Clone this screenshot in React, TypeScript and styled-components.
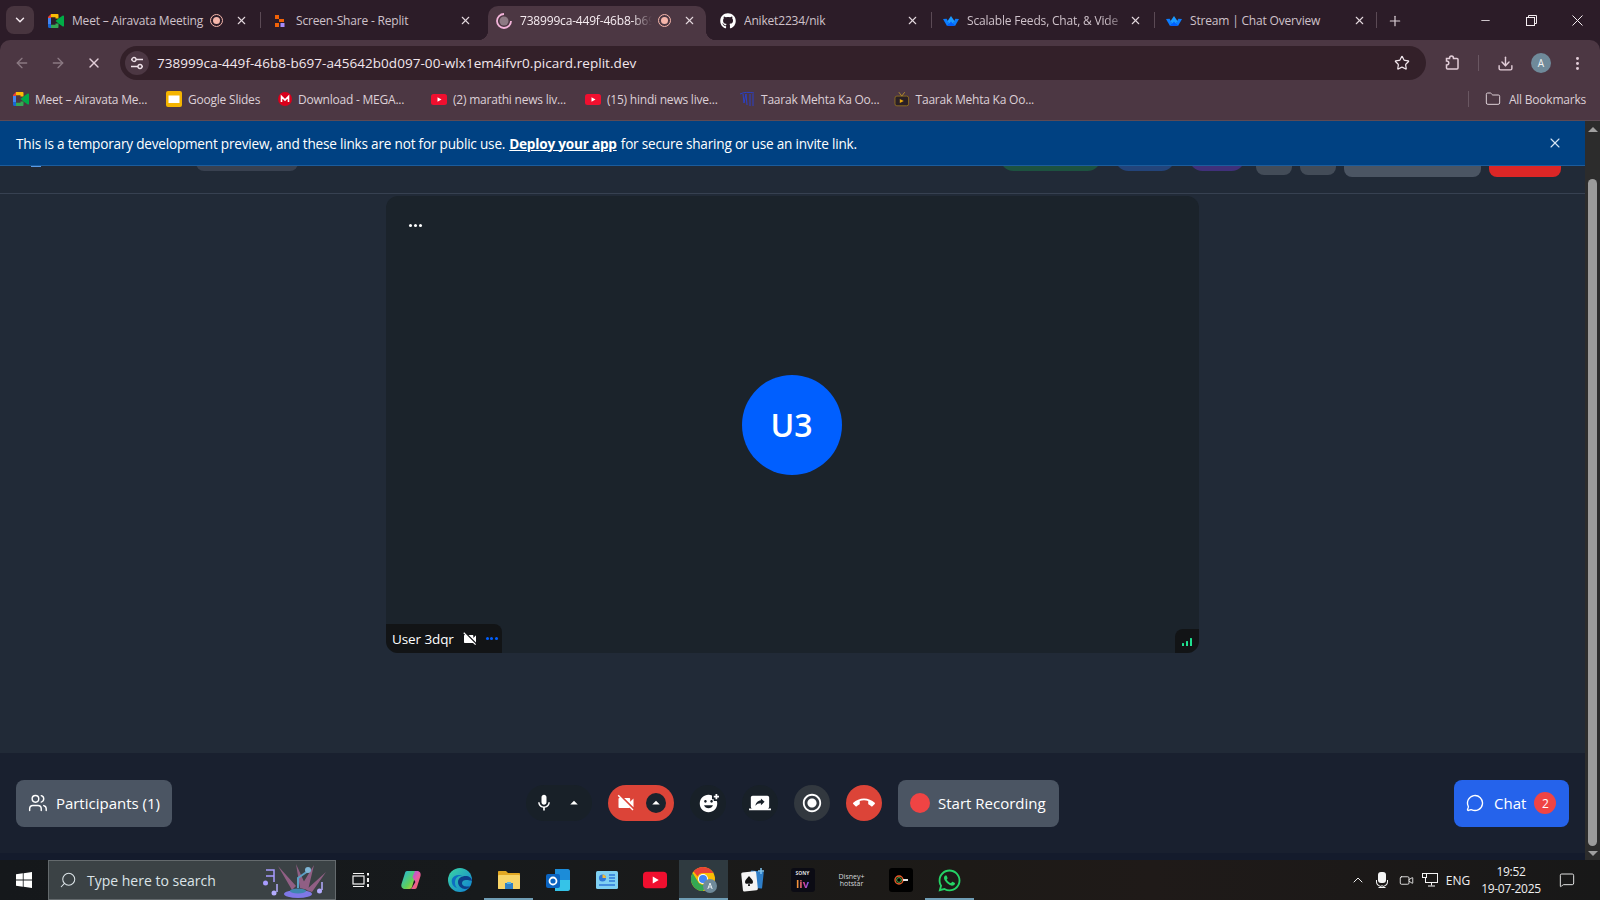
import React from "react";
import styled, { createGlobalStyle } from "styled-components";
import { ArrowLeft, ArrowRight, X, Star, Download, MoreVertical, Folder, ChevronDown, ChevronUp, Plus, Minus, Users, MessageCircle, Search, Video, MessageSquare } from "lucide-react";
import { MdMic, MdVideocamOff, MdArrowDropUp, MdAddReaction, MdRadioButtonChecked, MdCallEnd, MdScreenShare } from "react-icons/md";
import { FaGithub, FaWhatsapp } from "react-icons/fa";

const Global = createGlobalStyle`
  html, body { margin: 0; padding: 0; background: #19202f; overflow: hidden; }
  * { box-sizing: border-box; }
  body { font-family: "Open Sans", "Noto Sans", sans-serif; }
`;

const Page = styled.div`
  width: 1600px; height: 900px; display: flex; flex-direction: column; overflow: hidden;
`;

/* ---------- browser chrome ---------- */
const TabStrip = styled.div`
  height: 40px; flex: none; background: #2c1c28; display: flex; align-items: flex-end; color: #d3c5cd;
`;
const TabSearch = styled.div`
  width: 28px; height: 28px; margin: 0 2px 6px 6px; border-radius: 8px; background: #48353f; color: #f3e8ee;
  display: flex; align-items: center; justify-content: center;
`;
const Tab = styled.div<{ $w: number; $active?: boolean; $pr?: number; $pl?: number; $div?: boolean }>`
  position: relative; width: ${p => p.$w}px; height: 34px; flex: none;
  padding: 0 ${p => p.$pr ?? 13}px 5px ${p => p.$pl ?? 13}px;
  display: flex; align-items: center; font-size: 12px; letter-spacing: -0.18px;
  border-radius: 10px 10px 0 0;
  background: ${p => (p.$active ? "#4c3743" : "transparent")};
  color: ${p => (p.$active ? "#f6ecf1" : "#cfc2ca")};
  ${p => p.$div ? `&::after { content: ""; position: absolute; right: 0; top: 6px; width: 1px; height: 16px; background: #5b4a55; }` : ""}
  ${p => p.$active ? `
    &::before { content: ""; position: absolute; left: -10px; bottom: 0; width: 10px; height: 10px; background: radial-gradient(circle at 0 0, transparent 10px, #4c3743 10.5px); }
    &::after { content: ""; position: absolute; right: -10px; bottom: 0; width: 10px; height: 10px; background: radial-gradient(circle at 100% 0, transparent 10px, #4c3743 10.5px); }
  ` : ""}
`;
const TabIcon = styled.span`
  width: 16px; height: 16px; flex: none; display: flex; align-items: center; justify-content: center; margin-right: 8px;
`;
const TabTitle = styled.span<{ $fade?: boolean }>`
  flex: 1; min-width: 0; white-space: nowrap; overflow: hidden;
  ${p => p.$fade ? "mask-image: linear-gradient(to right, #000 85%, transparent 100%);" : ""}
`;
const RecDot = styled.span`
  width: 13px; height: 13px; flex: none; border-radius: 50%; border: 1.5px solid #f6b6ab; margin: 0 12px 0 6px;
  display: flex; align-items: center; justify-content: center;
  &::after { content: ""; width: 7px; height: 7px; border-radius: 50%; background: #f6b6ab; }
`;
const TabClose = styled(X).attrs({ size: 13, strokeWidth: 2 })`
  flex: none; color: #e4d8de;
`;
const NewTab = styled.div`
  width: 36px; height: 34px; display: flex; align-items: center; justify-content: center; color: #dccfd6; padding-bottom: 5px;
`;
const WindowControls = styled.div`
  margin-left: auto; display: flex; height: 40px; color: #f4ecf0;
`;
const WinBtn = styled.div`
  width: 46px; height: 40px; display: flex; align-items: center; justify-content: center;
`;

const ToolbarBg = styled.div`
  flex: none; background: #2c1c28;
`;
const Toolbar = styled.div`
  height: 40px; background: #4c3743; border-radius: 10px 10px 0 0; display: flex; align-items: flex-end; padding-left: 4px;
`;
const NavBtn = styled.div<{ $dim?: boolean }>`
  width: 36px; height: 34px; display: flex; align-items: center; justify-content: center;
  color: ${p => (p.$dim ? "#8b7983" : "#e2cdd8")};
`;
const Omnibox = styled.div`
  width: 1306px; height: 34px; margin: 0 8px; border-radius: 17px; background: #332029;
  display: flex; align-items: center; padding: 0 16px 0 5px; color: #f2e7ed; font-size: 13.5px; letter-spacing: 0.05px;
`;
const TuneBadge = styled.span`
  width: 24px; height: 24px; border-radius: 50%; background: #4c3743; color: #efe2e9; margin-right: 8px;
  display: flex; align-items: center; justify-content: center; flex: none;
`;
const Url = styled.span`
  flex: 1; white-space: nowrap;
`;
const ToolDivider = styled.span`
  width: 1px; height: 16px; background: #6a5762; margin: 0 8px 9px 8px; flex: none;
`;
const AvatarDot = styled.span`
  width: 20px; height: 20px; border-radius: 50%; background: #6f8a9a; color: #f3f3f3; font-size: 10px;
  display: flex; align-items: center; justify-content: center;
`;
const BookmarkBar = styled.div`
  height: 41px; background: #4c3743; border-bottom: 1px solid #5d4a54; display: flex; align-items: center; padding: 0 0 2px 13px;
  color: #ddd0d7; font-size: 12px; letter-spacing: -0.22px;
`;
const Bookmark = styled.div<{ $w: number }>`
  width: ${p => p.$w}px; flex: none; display: flex; align-items: center; gap: 6px; white-space: nowrap;
`;
const BookmarkRight = styled.div`
  margin-left: auto; display: flex; align-items: center; padding-right: 14px; gap: 8px;
`;
const BookmarkDivider = styled.span`
  width: 1px; height: 16px; background: #6a5762; margin-right: 8px;
`;

/* ---------- page ---------- */
const Viewport = styled.div`
  flex: 1; min-height: 0; display: flex;
`;
const Content = styled.div`
  position: relative; flex: 1; min-width: 0; display: flex; flex-direction: column; background: #212a37;
`;
const Banner = styled.div`
  position: absolute; left: 0; right: 0; top: 0; height: 45px; background: #004182; border-bottom: 1px solid #1c5c9c;
  display: flex; align-items: center; padding: 0 22px 0 16px; color: #fff; font-size: 13.6px; font-weight: 500; letter-spacing: -0.21px; z-index: 2;
  a { color: #fff; font-weight: 700; text-decoration: underline; margin: 0 4px; }
`;
const BannerClose = styled(X).attrs({ size: 16, strokeWidth: 1.6 })`
  margin-left: auto; color: #d8e6f4;
`;
const Header = styled.header`
  height: 73px; flex: none; border-bottom: 1px solid #374151; display: flex; align-items: center; padding: 0 24px 0 31px;
`;
const HeaderMark = styled.div`
  width: 10px; height: 20px; background: #5a9be6; margin-right: 155px;
`;
const SoftChip = styled.div<{ $w: number; $h: number; $bg: string; $round?: boolean }>`
  width: ${p => p.$w}px; height: ${p => p.$h}px; background: ${p => p.$bg}; border-radius: ${p => (p.$round ? "14px" : "8px")}; flex: none;
`;
const HeaderRight = styled.div`
  margin-left: auto; display: flex; align-items: center; gap: 8px;
`;
const PillGroup = styled.div`
  display: flex; gap: 14px; margin-right: 3px;
`;
const Stage = styled.main`
  flex: 1; min-height: 0; padding-top: 2px; display: flex; justify-content: center;
`;
const VideoTile = styled.section`
  position: relative; width: 813px; height: 457px; border-radius: 12px; background: #1b232b;
  display: flex; align-items: center; justify-content: center; overflow: hidden;
`;
const Avatar = styled.div`
  width: 100px; height: 100px; border-radius: 50%; background: #005fff; color: #fff; font-size: 32px; font-weight: 600;
  display: flex; align-items: center; justify-content: center; margin-right: 2px;
`;
const TileMenu = styled.div`
  position: absolute; left: 23px; top: 28px; display: flex; gap: 2px;
`;
const Dot = styled.span<{ $c: string }>`
  width: 3px; height: 3px; border-radius: 50%; background: ${p => p.$c};
`;
const NameChip = styled.div`
  position: absolute; left: 0; bottom: 0; height: 29px; width: 116px; background: #121416; border-radius: 0 8px 0 8px;
  display: flex; align-items: center; padding-left: 6px; color: #fff; font-size: 13.5px; letter-spacing: -0.1px; gap: 8px; white-space: nowrap;
`;
const ChipDots = styled.span`
  display: flex; gap: 1.5px;
`;
const SignalChip = styled.div`
  position: absolute; right: 0; bottom: 0; width: 24px; height: 24px; background: #121416; border-radius: 8px 0 0 0;
  display: flex; align-items: center; justify-content: center; padding-top: 2px;
`;
const Controls = styled.footer`
  height: 100px; flex: none; background: #19202f; display: grid; grid-template-columns: 1fr auto 1fr; align-items: center; padding: 0 16px;
`;
const BelowControls = styled.div`
  height: 7px; flex: none; background: #141b2c;
`;
const LabelBtn = styled.button<{ $bg: string; $w: number; $end?: boolean; $gap?: number }>`
  width: ${p => p.$w}px; height: 47px; border: 0; border-radius: 8px; background: ${p => p.$bg}; color: #fff;
  font: 400 15px "Open Sans", sans-serif; display: flex; align-items: center; gap: ${p => p.$gap ?? 8}px; padding: 0 12px; flex: none; white-space: nowrap;
  justify-self: ${p => (p.$end ? "end" : "start")};
`;
const CenterGroup = styled.div`
  display: flex; align-items: center; gap: 16px;
`;
const RoundBtn = styled.div<{ $bg: string }>`
  width: 36px; height: 36px; border-radius: 50%; background: ${p => p.$bg}; color: #fff; display: flex; align-items: center; justify-content: center; flex: none;
`;
const SplitBtn = styled.div<{ $bg: string }>`
  width: 66px; height: 36px; border-radius: 18px; background: ${p => p.$bg}; color: #fff; display: flex; align-items: center; justify-content: space-between; padding: 0 8px 0 8px; flex: none;
`;
const CaretBadge = styled.span<{ $bg: string }>`
  width: 20px; height: 20px; border-radius: 50%; background: ${p => p.$bg}; display: flex; align-items: center; justify-content: center; color: #fff;
`;
const RecordLight = styled.span`
  width: 20px; height: 20px; border-radius: 50%; background: #ef4444; flex: none;
`;
const CountBadge = styled.span`
  width: 22px; height: 22px; border-radius: 50%; background: #ef4444; color: #fff; font-size: 12px; display: flex; align-items: center; justify-content: center; margin-left: -2px; flex: none;
`;
const ScrollTrack = styled.div`
  width: 15px; flex: none; background: #2c2c2c; display: flex; flex-direction: column; align-items: center; padding: 6px 0 4px;
`;
const ScrollThumb = styled.div`
  flex: 1; width: 9px; background: #9b9b9b; border-radius: 5px; margin: 47px 0 5px;
`;
const ArrowGlyph = styled.span<{ $down?: boolean }>`
  width: 0; height: 0; border-left: 5px solid transparent; border-right: 5px solid transparent;
  ${p => p.$down ? "border-top: 5px solid #a0a0a0;" : "border-bottom: 5px solid #a0a0a0;"}
`;

/* ---------- taskbar ---------- */
const Taskbar = styled.div`
  height: 40px; flex: none; display: flex; align-items: stretch; color: #f2f2f2;
  background: linear-gradient(90deg, #15181b 0%, #171a1c 30%, #1d1a17 60%, #1f1a18 72%, #181818 100%);
`;
const StartSlot = styled.div`
  width: 48px; display: flex; align-items: center; justify-content: center;
`;
const SearchBox = styled.div`
  width: 288px; background: #3b4245; border: 1px solid #646a6d; display: flex; align-items: center; padding-left: 10px; gap: 10px;
  color: #dce4e8; font-size: 14px; position: relative; flex: none;
`;
const SearchArt = styled.span`
  margin-left: auto; margin-right: 4px; display: flex;
`;
const Slot = styled.div<{ $w?: number; $on?: boolean; $bar?: boolean }>`
  position: relative; width: ${p => p.$w ?? 49}px; flex: none; display: flex; align-items: center; justify-content: center;
  background: ${p => (p.$on ? "#2f3a40" : "transparent")};
  ${p => p.$bar ? `&::after { content: ""; position: absolute; left: 0; right: 0; bottom: 0; height: 2px; background: #6f9db5; }` : ""}
`;
const Tray = styled.div`
  margin-left: auto; display: flex; align-items: center; color: #f0f0f0; padding-right: 25px;
`;
const TrayItem = styled.span<{ $w: number }>`
  width: ${p => p.$w}px; display: flex; align-items: center; justify-content: center; flex: none; font-size: 12px;
`;
const Clock = styled.div`
  width: 74px; margin: 0 11px 0 0; text-align: center; font-size: 12px; letter-spacing: -0.3px; line-height: 17px; white-space: nowrap;
`;
const SonyTile = styled.span`
  width: 24px; height: 24px; background: #0b0b14; border-radius: 3px; display: flex; flex-direction: column; align-items: center; justify-content: space-between; padding: 2px 0; color: #ddd; font-size: 5px; font-weight: 700; line-height: 6px;
`;
const LivMark = styled.span`
  font-size: 11px; line-height: 12px; font-weight: 700; color: #f5a623;
  background: linear-gradient(90deg, #f5a623, #e0409a 60%, #6a5cf0); -webkit-background-clip: text; -webkit-text-fill-color: transparent;
`;
const HotstarMark = styled.span`
  display: flex; flex-direction: column; align-items: center; color: #d4d8dc; font-size: 7px; line-height: 7px;
`;
const BlackTile = styled.span`
  width: 24px; height: 24px; background: #000; border-radius: 3px; display: flex; align-items: center; justify-content: center;
`;

/* ---------- drawn logos ---------- */
const MeetLogo = () => (
  <svg width="16" height="14" viewBox="0 0 16 14">
    <path d="M3 0 0 3v1h3z" fill="#ea4335" />
    <rect x="0" y="4" width="3" height="6" fill="#4285f4" />
    <path d="M0 10h3v4H1.2C.5 14 0 13.4 0 12.8z" fill="#1967d2" />
    <path d="M3 0h6.5c.6 0 1 .4 1 1v3.5H7.500V3.200H3z" fill="#fbbc04" />
    <path d="M3 10.800h4.500V9.500h3V13c0 .6-.4 1-1 1H3z" fill="#34a853" />
    <path d="M7.500 7 10.500 4.500 14.800 1.500c.5-.3 1.200 0 1.200.6v9.800c0 .6-.7.900-1.200.6L10.500 9.500z" fill="#00ac47" />
  </svg>
);
const ReplitLogo = () => (
  <svg width="10" height="12" viewBox="0 0 10 12">
    <rect x="0" y="0" width="4" height="4" fill="#f26207" />
    <rect x="4" y="4" width="5" height="3" fill="#f26207" />
    <rect x="0" y="8" width="4" height="4" fill="#f26207" />
    <rect x="5.500" y="8" width="4" height="4" fill="#a78bfa" />
  </svg>
);
const SpinnerLogo = () => (
  <svg width="16" height="16" viewBox="0 0 16 16" fill="none">
    <circle cx="8" cy="8" r="4.500" fill="#8d7a84" />
    <path d="M8 1a7 7 0 1 0 7 7" stroke="#f3b4da" strokeWidth="1.800" />
  </svg>
);
const StreamLogo = () => (
  <svg width="16" height="10" viewBox="0 0 16 10">
    <path d="M0 3l3.600-.2L6.500 8 4 10z" fill="#0b7cff" />
    <path d="M16 3l-3.600-.2L9.500 8 12 10z" fill="#0b7cff" />
    <path d="M8 0l3.600 5.200L8 10 4.400 5.200z" fill="#1b9bff" />
    <path d="M4 10l4-4.500 4 4.500z" fill="#005fff" />
  </svg>
);
const SlidesLogo = () => (
  <svg width="16" height="16" viewBox="0 0 16 16">
    <rect width="16" height="16" rx="2" fill="#f4b400" />
    <rect x="2.500" y="4.500" width="11" height="7.500" fill="#fff" />
  </svg>
);
const MegaLogo = () => (
  <svg width="14" height="14" viewBox="0 0 14 14" fill="none">
    <circle cx="7" cy="7" r="7" fill="#d9001b" />
    <path d="M3.500 10V4.500L7 8l3.500-3.500V10" stroke="#fff" strokeWidth="1.600" />
  </svg>
);
const YtLogo = ({ w = 16, h = 11 }: { w?: number; h?: number }) => (
  <svg width={w} height={h} viewBox="0 0 16 11">
    <rect width="16" height="11" rx="2.500" fill="#f00f2f" />
    <path d="M6.500 3.200v4.600L10.500 5.500z" fill="#fff" />
  </svg>
);
const ScratchLogo = () => (
  <svg width="16" height="16" viewBox="0 0 16 16" fill="none" stroke="#2a40c8" strokeWidth="1">
    <path d="M1 3c4-2 9-2 14-1M4 3l1 9 2-9 1 11M11 3l0 12M14 3l0 12" />
  </svg>
);
const TvLogo = () => (
  <svg width="16" height="16" viewBox="0 0 16 16" fill="none">
    <rect x="1" y="5" width="14" height="10" rx="2" fill="#2a2025" stroke="#8a6a20" />
    <path d="M5 1l3 4 3-4" stroke="#b08a2c" />
    <path d="M6 8v4l4-2z" fill="#e8a90c" />
  </svg>
);
const TuneIcon = () => (
  <svg width="14" height="14" viewBox="0 0 14 14" fill="none" stroke="currentColor" strokeWidth="1.300">
    <path d="M1 3.500h1M6 3.500h7M1 10.500h7M12 10.500h1" />
    <circle cx="4" cy="3.500" r="2" />
    <circle cx="10" cy="10.500" r="2" />
  </svg>
);
const ExtensionIcon = () => (
  <svg width="16" height="16" viewBox="0 0 16 16" fill="none" stroke="currentColor" strokeWidth="1.500">
    <path d="M2.500 3.500h3c0-1.500 .8-2.500 2-2.500s2 1 2 2.500h3.500a1 1 0 0 1 1 1v8.500a1 1 0 0 1-1 1H3.500a1 1 0 0 1-1-1v-3c1.400 0 2.300-.8 2.300-2s-.9-2-2.300-2z" />
  </svg>
);
const WinLogo = () => (
  <svg width="16" height="16" viewBox="0 0 16 16" fill="#fff">
    <path d="M0 2.300 6.800 1.300v6.300H0zM7.600 1.200 16 0v7.600H7.600zM0 8.400h6.800v6.300L0 13.700zM7.600 8.400H16V16l-8.400-1.200z" />
  </svg>
);
const MicArt = () => (
  <svg width="70" height="36" viewBox="0 0 68 36" fill="none">
    <path d="M16 4l14 24 4-4zM52 3L38 26l8 2zM64 10L44 28l6 2zM34 2l4 24 6-2z" fill="#a0648f" opacity=".85" />
    <path d="M4 8h8v12M4 14h8" stroke="#a89cff" strokeWidth="1.500" />
    <circle cx="3.500" cy="21" r="2.500" fill="#a89cff" />
    <path d="M15 22v8" stroke="#b4acff" strokeWidth="1.500" />
    <circle cx="12" cy="31" r="2.500" fill="#b4acff" />
    <path d="M60 20v8" stroke="#b4acff" strokeWidth="1.500" />
    <circle cx="57.500" cy="29" r="2.500" fill="#b4acff" />
    <path d="M36 26V16l10-7" stroke="#5c9fc4" strokeWidth="2" />
    <circle cx="46" cy="8" r="3" fill="#7fb6d6" />
    <ellipse cx="36" cy="32" rx="14" ry="4" fill="#7f78e8" />
    <ellipse cx="36" cy="29" rx="8" ry="2.500" fill="#3f86b0" />
  </svg>
);
const TaskView = () => (
  <svg width="18" height="16" viewBox="0 0 18 16" fill="none" stroke="#f4f4f4" strokeWidth="1.200">
    <rect x="1" y="4" width="11" height="8" />
    <path d="M1 1.500h11M1 14.500h11" />
    <path d="M16 1v2.500M16 6v4M16 12v3" strokeWidth="2" />
  </svg>
);
const CopilotLogo = () => (
  <svg width="22" height="22" viewBox="0 0 22 22">
    <defs>
      <linearGradient id="cpa" x1="0" y1="0" x2="1" y2="1"><stop offset="0" stopColor="#1fb6e8" /><stop offset=".6" stopColor="#5fd05a" /><stop offset="1" stopColor="#f5c12e" /></linearGradient>
      <linearGradient id="cpb" x1="0" y1="0" x2="1" y2="1"><stop offset="0" stopColor="#8a5cf0" /><stop offset=".5" stopColor="#e65aa8" /><stop offset="1" stopColor="#f76b3c" /></linearGradient>
    </defs>
    <path d="M7 2h8c1.200 0 1.500 1.200 1 2.500L12 18c-.4 1.200-1.200 2-2.500 2H5C2 20 .8 17.500 1.500 15L5 4c.3-1.200 1-2 2-2z" fill="url(#cpa)" />
    <path d="M15 2h2c3 0 4.200 2.500 3.500 5L17 18c-.3 1.200-1 2-2 2H10c1.200 0 2-.8 2.400-2l3-5-3-5z" fill="url(#cpb)" />
  </svg>
);
const EdgeLogo = () => (
  <svg width="24" height="24" viewBox="0 0 24 24">
    <defs><linearGradient id="edg" x1="0" y1="0" x2="1" y2="1"><stop offset="0" stopColor="#3bd6a2" /><stop offset="1" stopColor="#0f7fd6" /></linearGradient></defs>
    <circle cx="12" cy="12" r="12" fill="url(#edg)" />
    <path d="M24 13c0-3-3-5-6.500-5S10 10 10 14s3.500 7 7 7c3 0 4-1 5-3-2 1-8 1-8-3 0-2 2-3 4-3s6 1 6 1z" fill="#0c3f8a" />
    <path d="M4 11c2-4 7-5 11-3-5-1-8 2-8 7 0 2 1 4 2 5-4-1-6-5-5-9z" fill="#0d6ec2" />
  </svg>
);
const ExplorerLogo = () => (
  <svg width="22" height="20" viewBox="0 0 22 20">
    <path d="M0 2c0-.6.400-1 1-1h7l2 2h11c.6 0 1 .4 1 1v14c0 .6-.4 1-1 1H1c-.6 0-1-.4-1-1z" fill="#e2a823" />
    <rect x="0" y="5" width="22" height="14" rx="1" fill="#f8d568" />
    <path d="M7 13h8v6H7z" fill="#2f80c5" />
    <path d="M9 12h4v2H9z" fill="#59b4e8" />
  </svg>
);
const OutlookLogo = () => (
  <svg width="24" height="24" viewBox="0 0 24 24">
    <path d="M9 1h13c1 0 2 1 2 2v12L12 22H9z" fill="#1c8cd8" />
    <path d="M9 12h15v9c0 1-1 2-2 2H9z" fill="#35c3e8" />
    <rect x="0" y="6" width="14" height="14" rx="2" fill="#0a63c0" />
    <circle cx="7" cy="13" r="3.500" fill="none" stroke="#fff" strokeWidth="1.800" />
  </svg>
);
const WidgetsLogo = () => (
  <svg width="22" height="18" viewBox="0 0 22 18">
    <rect width="22" height="18" rx="1.500" fill="#7fd0f2" />
    <circle cx="6.500" cy="7" r="3.500" fill="#2f78d8" />
    <path d="M6.500 3.500A3.500 3.500 0 0 1 10 7H6.500z" fill="#f2b93b" />
    <path d="M13 4h6M13 7h6M13 10h6" stroke="#2f78d8" strokeWidth="1.300" />
    <path d="M3 14h16" stroke="#2f78d8" strokeWidth="1.500" />
  </svg>
);
const ChromeLogo = () => (
  <svg width="26" height="26" viewBox="0 0 26 26">
    <circle cx="12" cy="12" r="12" fill="#fbbc04" />
    <path d="M12 0a12 12 0 0 1 10.400 6H12a6 6 0 0 0-5.400 3.400L2.600 4.600A12 12 0 0 1 12 0z" fill="#ea4335" />
    <path d="M1.600 6A12 12 0 0 0 12 24l5-8.600A6 6 0 0 1 6.600 14z" fill="#34a853" />
    <circle cx="12" cy="12" r="5" fill="#fff" />
    <circle cx="12" cy="12" r="4" fill="#4285f4" />
    <circle cx="19" cy="19" r="7" fill="#6f8a9a" />
    <path d="M16.800 22l2.200-6 2.200 6M17.600 20h2.800" stroke="#e8eef2" strokeWidth="1" fill="none" />
  </svg>
);
const CardsLogo = () => (
  <svg width="24" height="24" viewBox="0 0 24 24">
    <rect x="9" y="3" width="13" height="17" rx="1" fill="#2e7ec8" transform="rotate(6 15 11)" />
    <rect x="1" y="4" width="15" height="19" rx="1.500" fill="#f4f4f4" transform="rotate(-6 8 13)" />
    <path d="M8 8c2 2.500 4 4 4 6s-2.500 2.500-3.500 1l.5 3H7l.5-3c-1 1.500-3.500 1-3.500-1s2-3.500 4-6z" fill="#111" />
    <path d="M20 0v6M17 3h6" stroke="#7fc4f0" strokeWidth="1.500" />
  </svg>
);
const BlackGlyph = () => (
  <svg width="16" height="14" viewBox="0 0 16 14" fill="none">
    <circle cx="6" cy="7" r="4" stroke="#e85a2a" strokeWidth="1.400" />
    <circle cx="6" cy="7" r="2.400" stroke="#4cb050" strokeWidth="1" />
    <path d="M10 7h5" stroke="#e8e8e8" strokeWidth="2" />
  </svg>
);
const SignalBars = () => (
  <svg width="10" height="8" viewBox="0 0 10 8" fill="#20e090">
    <rect x="0" y="5" width="2" height="3" rx=".5" />
    <rect x="4" y="3" width="2" height="5" rx=".5" />
    <rect x="8" y="0" width="2" height="8" rx=".5" />
  </svg>
);
const RestoreIcon = () => (
  <svg width="11" height="11" viewBox="0 0 11 11" fill="none" stroke="currentColor">
    <rect x=".5" y="2.500" width="8" height="8" />
    <path d="M2.500 2.500v-2h8v8h-2" />
  </svg>
);
const ThinClose = () => (
  <svg width="11" height="11" viewBox="0 0 11 11" stroke="currentColor"><path d="M.5.5l10 10M10.500.5l-10 10" /></svg>
);
const TrayMic = () => (
  <svg width="12" height="16" viewBox="0 0 12 16" fill="#f4f4f4">
    <rect x="2" y="0" width="8" height="11" rx="3" />
    <path d="M0 8v2a6 5 0 0 0 12 0V8h-1v2a5 4 0 0 1-10 0V8zM5.500 13h1v2h3v1h-7v-1h3z" />
  </svg>
);
const TrayNet = () => (
  <svg width="16" height="14" viewBox="0 0 16 14" fill="none" stroke="#f4f4f4">
    <rect x="3.500" y=".5" width="12" height="9" />
    <path d="M9.500 9.500v3M6 13h7" />
    <rect x=".5" y=".5" width="4" height="4" fill="#1b1a19" />
  </svg>
);

const tabs = [
  { w: 225, title: "Meet – Airavata Meeting", icon: <MeetLogo />, rec: true, div: true, pl: 12 },
  { w: 227, title: "Screen-Share - Replit", icon: <ReplitLogo />, pr: 16, pl: 11 },
  { w: 218, title: "738999ca-449f-46b8-b69", icon: <SpinnerLogo />, rec: true, active: true, pl: 8, pr: 10, fade: true },
  { w: 226, title: "Aniket2234/nik", icon: <FaGithub size={16} color="#fff" />, div: true, pl: 14 },
  { w: 223, title: "Scalable Feeds, Chat, & Vide", icon: <StreamLogo />, div: true, pl: 11, fade: true },
  { w: 222, title: "Stream | Chat Overview", icon: <StreamLogo />, div: true, pl: 11, pr: 11 },
];

const bookmarks = [
  { w: 153, title: "Meet – Airavata Me...", icon: <MeetLogo /> },
  { w: 112, title: "Google Slides", icon: <SlidesLogo /> },
  { w: 153, title: "Download - MEGA...", icon: <MegaLogo /> },
  { w: 154, title: "(2) marathi news liv...", icon: <YtLogo /> },
  { w: 154, title: "(15) hindi news live...", icon: <YtLogo /> },
  { w: 155, title: "Taarak Mehta Ka Oo...", icon: <ScratchLogo /> },
  { w: 140, title: "Taarak Mehta Ka Oo...", icon: <TvLogo /> },
];

export default function App() {
  return (
    <Page>
      <Global />
      <TabStrip>
        <TabSearch><ChevronDown size={14} strokeWidth={2.5} /></TabSearch>
        {tabs.map(t => (
          <Tab key={t.title} $w={t.w} $active={t.active} $pr={t.pr} $pl={t.pl} $div={t.div}>
            <TabIcon>{t.icon}</TabIcon>
            <TabTitle $fade={t.fade}>{t.title}</TabTitle>
            {t.rec && <RecDot />}
            <TabClose />
          </Tab>
        ))}
        <NewTab><Plus size={16} strokeWidth={1.8} /></NewTab>
        <WindowControls>
          <WinBtn><Minus size={13} strokeWidth={1.5} /></WinBtn>
          <WinBtn><RestoreIcon /></WinBtn>
          <WinBtn><ThinClose /></WinBtn>
        </WindowControls>
      </TabStrip>
      <ToolbarBg>
        <Toolbar>
          <NavBtn $dim><ArrowLeft size={16} /></NavBtn>
          <NavBtn $dim><ArrowRight size={16} /></NavBtn>
          <NavBtn><X size={16} /></NavBtn>
          <Omnibox>
            <TuneBadge><TuneIcon /></TuneBadge>
            <Url>738999ca-449f-46b8-b697-a45642b0d097-00-wlx1em4ifvr0.picard.replit.dev</Url>
            <Star size={16} strokeWidth={1.8} />
          </Omnibox>
          <NavBtn><ExtensionIcon /></NavBtn>
          <ToolDivider />
          <NavBtn><Download size={17} strokeWidth={2} /></NavBtn>
          <NavBtn><AvatarDot>A</AvatarDot></NavBtn>
          <NavBtn><MoreVertical size={17} strokeWidth={2.2} /></NavBtn>
        </Toolbar>
      </ToolbarBg>
      <BookmarkBar>
        {bookmarks.map((b, i) => (
          <Bookmark key={i} $w={b.w}>{b.icon}<span>{b.title}</span></Bookmark>
        ))}
        <BookmarkRight>
          <BookmarkDivider />
          <Folder size={16} strokeWidth={1.5} />
          <span>All Bookmarks</span>
        </BookmarkRight>
      </BookmarkBar>

      <Viewport>
        <Content>
          <Banner>
            This is a temporary development preview, and these links are not for public use.
            <a>Deploy your app</a>
            for secure sharing or use an invite link.
            <BannerClose />
          </Banner>
          <Header>
            <HeaderMark />
            <SoftChip $w={102} $h={28} $bg="#394150" />
            <HeaderRight>
              <PillGroup>
                <SoftChip $w={101} $h={27} $bg="#1d5240" $round />
                <SoftChip $w={60} $h={27} $bg="#23447a" $round />
                <SoftChip $w={56} $h={27} $bg="#40307a" $round />
              </PillGroup>
              <SoftChip $w={36} $h={36} $bg="#434c58" />
              <SoftChip $w={36} $h={36} $bg="#434c58" />
              <SoftChip $w={137} $h={40} $bg="#4b5563" />
              <SoftChip $w={72} $h={40} $bg="#dc2626" />
            </HeaderRight>
          </Header>
          <Stage>
            <VideoTile>
              <TileMenu><Dot $c="#fff" /><Dot $c="#fff" /><Dot $c="#fff" /></TileMenu>
              <Avatar>U3</Avatar>
              <NameChip>
                User 3dqr
                <MdVideocamOff size={16} color="#fff" />
                <ChipDots><Dot $c="#005fff" /><Dot $c="#005fff" /><Dot $c="#005fff" /></ChipDots>
              </NameChip>
              <SignalChip><SignalBars /></SignalChip>
            </VideoTile>
          </Stage>
          <Controls>
            <LabelBtn $bg="#4b5563" $w={156}><Users size={20} strokeWidth={1.7} />Participants (1)</LabelBtn>
            <CenterGroup>
              <SplitBtn $bg="#182028">
                <MdMic size={20} />
                <CaretBadge $bg="transparent"><MdArrowDropUp size={18} /></CaretBadge>
              </SplitBtn>
              <SplitBtn $bg="#dc4438">
                <MdVideocamOff size={20} />
                <CaretBadge $bg="#19232d"><MdArrowDropUp size={18} /></CaretBadge>
              </SplitBtn>
              <RoundBtn $bg="#182028"><MdAddReaction size={21} /></RoundBtn>
              <RoundBtn $bg="#182028"><MdScreenShare size={22} /></RoundBtn>
              <RoundBtn $bg="#32383f"><MdRadioButtonChecked size={22} /></RoundBtn>
              <RoundBtn $bg="#dc4438"><MdCallEnd size={22} /></RoundBtn>
              <LabelBtn $bg="#4b5563" $w={161}><RecordLight />Start Recording</LabelBtn>
            </CenterGroup>
            <LabelBtn $bg="#2563eb" $w={115} $end $gap={10}><MessageCircle size={18} strokeWidth={1.8} />Chat<CountBadge>2</CountBadge></LabelBtn>
          </Controls>
          <BelowControls />
        </Content>
        <ScrollTrack>
          <ArrowGlyph />
          <ScrollThumb />
          <ArrowGlyph $down />
        </ScrollTrack>
      </Viewport>

      <Taskbar>
        <StartSlot><WinLogo /></StartSlot>
        <SearchBox>
          <Search size={18} strokeWidth={1.4} style={{ transform: "scaleX(-1)" }} />
          Type here to search
          <SearchArt><MicArt /></SearchArt>
        </SearchBox>
        <Slot $w={50}><TaskView /></Slot>
        <Slot><CopilotLogo /></Slot>
        <Slot><EdgeLogo /></Slot>
        <Slot $bar><ExplorerLogo /></Slot>
        <Slot><OutlookLogo /></Slot>
        <Slot $w={49}><WidgetsLogo /></Slot>
        <Slot $w={48}><YtLogo w={24} h={18} /></Slot>
        <Slot $w={49} $on $bar><ChromeLogo /></Slot>
        <Slot $w={50}><CardsLogo /></Slot>
        <Slot><SonyTile>SONY<LivMark>liv</LivMark></SonyTile></Slot>
        <Slot><HotstarMark><span>Disney+</span><span>hotstar</span></HotstarMark></Slot>
        <Slot><BlackTile><BlackGlyph /></BlackTile></Slot>
        <Slot $bar><FaWhatsapp size={25} color="#25d366" /></Slot>
        <Tray>
          <TrayItem $w={24}><ChevronUp size={16} strokeWidth={1.5} /></TrayItem>
          <TrayItem $w={24}><TrayMic /></TrayItem>
          <TrayItem $w={24}><Video size={15} strokeWidth={1.4} /></TrayItem>
          <TrayItem $w={24}><TrayNet /></TrayItem>
          <TrayItem $w={32}>ENG</TrayItem>
          <Clock>19:52<br />19-07-2025</Clock>
          <MessageSquare size={16} strokeWidth={1.4} />
        </Tray>
      </Taskbar>
    </Page>
  );
}
